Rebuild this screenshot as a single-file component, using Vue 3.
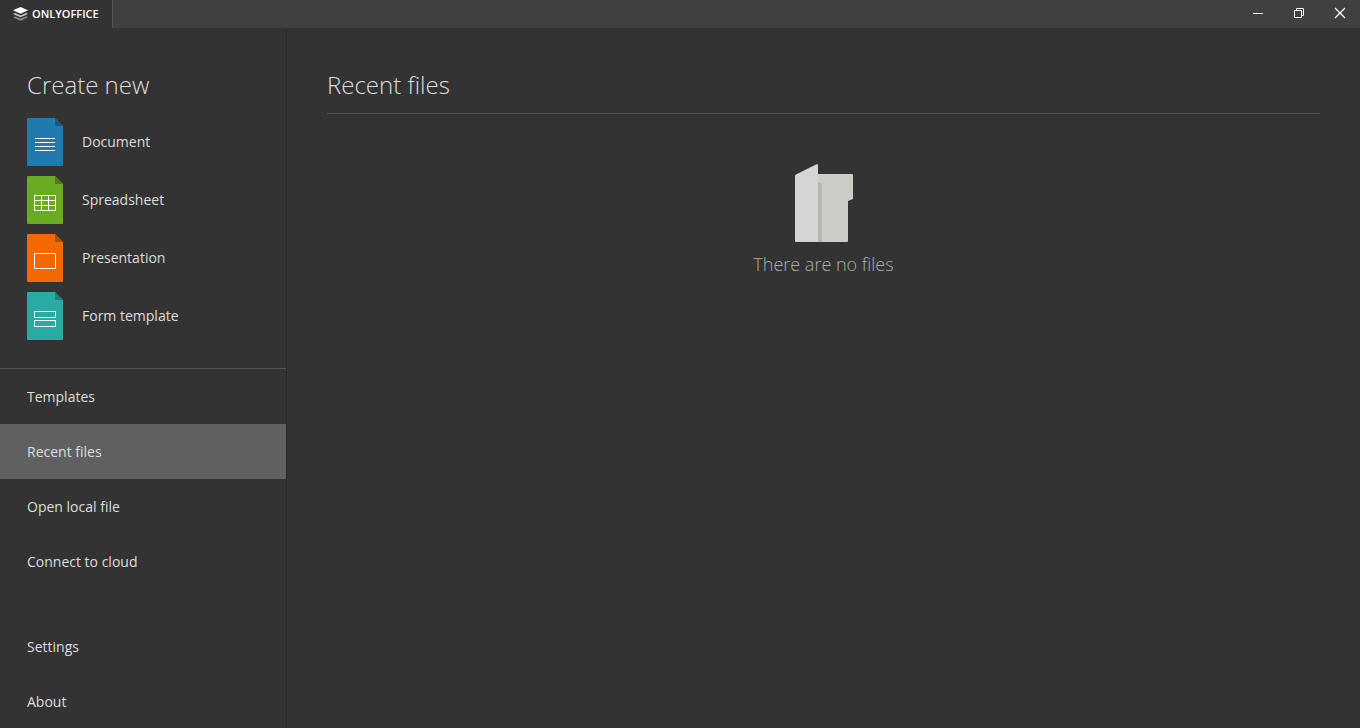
<script setup>
import { ref } from 'vue'

const creators = [
  { id: 'document', label: 'Document', color: '#1f7bae', fold: '#175b82', glyph: 'M8 20.5h20M8 24.5h20M8 28.5h20M8 32.5h20' },
  { id: 'spreadsheet', label: 'Spreadsheet', color: '#6aab20', fold: '#4b7d16', glyph: 'M7.5 19.5h21v15h-21zM7 24.5h22M7 29.5h22M14.5 19v16M21.5 19v16' },
  { id: 'presentation', label: 'Presentation', color: '#f36900', fold: '#b54d00', glyph: 'M7.5 19.5h21v15h-21z' },
  { id: 'form', label: 'Form template', color: '#27aba3', fold: '#1d8079', glyph: 'M7.5 19.5h21v6h-21zM7.5 28.5h21v6h-21z' },
]
const places = ['Templates', 'Recent files', 'Open local file', 'Connect to cloud']
const extras = ['Settings', 'About']
const active = ref('Recent files')
</script>

<template>
  <div class="window">
    <header class="titlebar">
      <button class="brand" type="button">
        <svg width="15" height="14" viewBox="0 0 15 14" aria-hidden="true">
          <path d="M0 10.300l2-.9 5.500 2.400L13 9.400l2 .9-7.500 3.400z" fill="#8f8f8f" />
          <path d="M0 6.900L2 6l5.500 2.400L13 6l2 .9-7.500 3.400z" fill="#c8c8c8" />
          <path d="M7.500 0L15 3.300 7.500 6.700 0 3.300z" fill="#fff" />
        </svg>
        <span>ONLYOFFICE</span>
      </button>
      <div class="controls">
        <button type="button" aria-label="Minimize">
          <svg width="12" height="12" viewBox="0 0 12 12"><path d="M1 6.500h10" /></svg>
        </button>
        <button type="button" aria-label="Restore">
          <svg width="12" height="12" viewBox="0 0 12 12"><path d="M1.500 3.500h7v7h-7zM3.500 3.500v-2h7v7h-2" /></svg>
        </button>
        <button type="button" aria-label="Close">
          <svg width="12" height="12" viewBox="0 0 12 12"><path stroke-width="1.300" d="M1 1l10 10M11 1L1 11" /></svg>
        </button>
      </div>
    </header>
    <div class="body">
      <aside class="sidebar">
        <section class="create">
          <h2>Create new</h2>
          <button v-for="c in creators" :key="c.id" class="creator" type="button">
            <svg width="36" height="48" viewBox="0 0 36 48" aria-hidden="true">
              <path d="M1 0h27l8 8v39a1 1 0 0 1-1 1H1a1 1 0 0 1-1-1V1a1 1 0 0 1 1-1z" :fill="c.color" />
              <path d="M28 0l8 8h-7a1 1 0 0 1-1-1z" :fill="c.fold" />
              <path :d="c.glyph" fill="none" stroke="#fff" />
            </svg>
            <span>{{ c.label }}</span>
          </button>
        </section>
        <nav class="menu">
          <button
            v-for="p in places"
            :key="p"
            type="button"
            :class="{ active: p === active }"
            @click="active = p"
          >{{ p }}</button>
        </nav>
        <nav class="menu extra">
          <button
            v-for="p in extras"
            :key="p"
            type="button"
            :class="{ active: p === active }"
            @click="active = p"
          >{{ p }}</button>
        </nav>
      </aside>
      <main class="content">
        <h1>Recent files</h1>
        <div class="empty">
          <svg width="58" height="78" viewBox="0 0 58 78" aria-hidden="true">
            <path d="M22 10h35a1 1 0 0 1 1 1v24l-5 2v40a1 1 0 0 1-1 1H22z" fill="#cbccc6" />
            <path d="M23 18l3 1 1 2v57h-4z" fill="#b5b6b2" />
            <path d="M0 11.500Q0 11 1 10.500L22 0q1 0 1 1v77H1a1 1 0 0 1-1-1z" fill="#d5d5d4" />
          </svg>
          <p>There are no files</p>
        </div>
      </main>
    </div>
  </div>
</template>

<style>
body {
  background: #333;
}
</style>

<style scoped>
.window {
  display: flex;
  flex-direction: column;
  height: 100vh;
  overflow: hidden;
  background: #333;
  color: #dedede;
  font-family: "Open Sans", "Noto Sans", sans-serif;
  font-size: 14px;
}
button {
  margin: 0;
  padding: 0;
  border: 0;
  background: none;
  color: inherit;
  font: inherit;
  text-align: left;
  cursor: pointer;
}
svg {
  display: block;
  flex: none;
}
h1,
h2,
p {
  margin: 0;
  font-weight: 300;
}
h1,
h2 {
  font-size: 24px;
  line-height: 32px;
}
.titlebar {
  display: flex;
  justify-content: space-between;
  flex: none;
  height: 28px;
  background: #404040;
}
.brand {
  display: flex;
  align-items: center;
  gap: 4px;
  padding: 0 13px 1px;
  border-right: 1px solid #555;
  background: #333;
  color: #fff;
  font-size: 11px;
  font-weight: 600;
}
.controls {
  display: flex;
}
.controls button {
  display: flex;
  align-items: center;
  justify-content: center;
  width: 41px;
  padding-bottom: 2px;
}
.controls path {
  fill: none;
  stroke: #fff;
}
.body {
  display: flex;
  flex: 1;
  min-height: 0;
}
.sidebar {
  flex: none;
  width: 286px;
  border-right: 1px solid #2a2a2a;
  overflow: hidden;
}
.create {
  display: flex;
  flex-direction: column;
  gap: 10px;
  padding: 41px 27px 28px;
  border-bottom: 1px solid #555;
}
.create h2 {
  margin-bottom: 7px;
}
.creator {
  display: flex;
  align-items: center;
  gap: 19px;
}
.creator span {
  padding-bottom: 2px;
}
.menu {
  display: flex;
  flex-direction: column;
}
.menu button {
  height: 55px;
  padding: 0 27px;
}
.menu .active {
  background: #606060;
}
.extra {
  margin-top: 30px;
}
.content {
  flex: 1;
  padding: 41px 40px;
}
.content h1 {
  padding-bottom: 12px;
  border-bottom: 1px solid #555;
}
.empty {
  display: flex;
  flex-direction: column;
  align-items: center;
  gap: 10px;
  padding-top: 50px;
}
.empty p {
  color: #adadad;
  font-size: 18px;
  line-height: 24px;
}
</style>
